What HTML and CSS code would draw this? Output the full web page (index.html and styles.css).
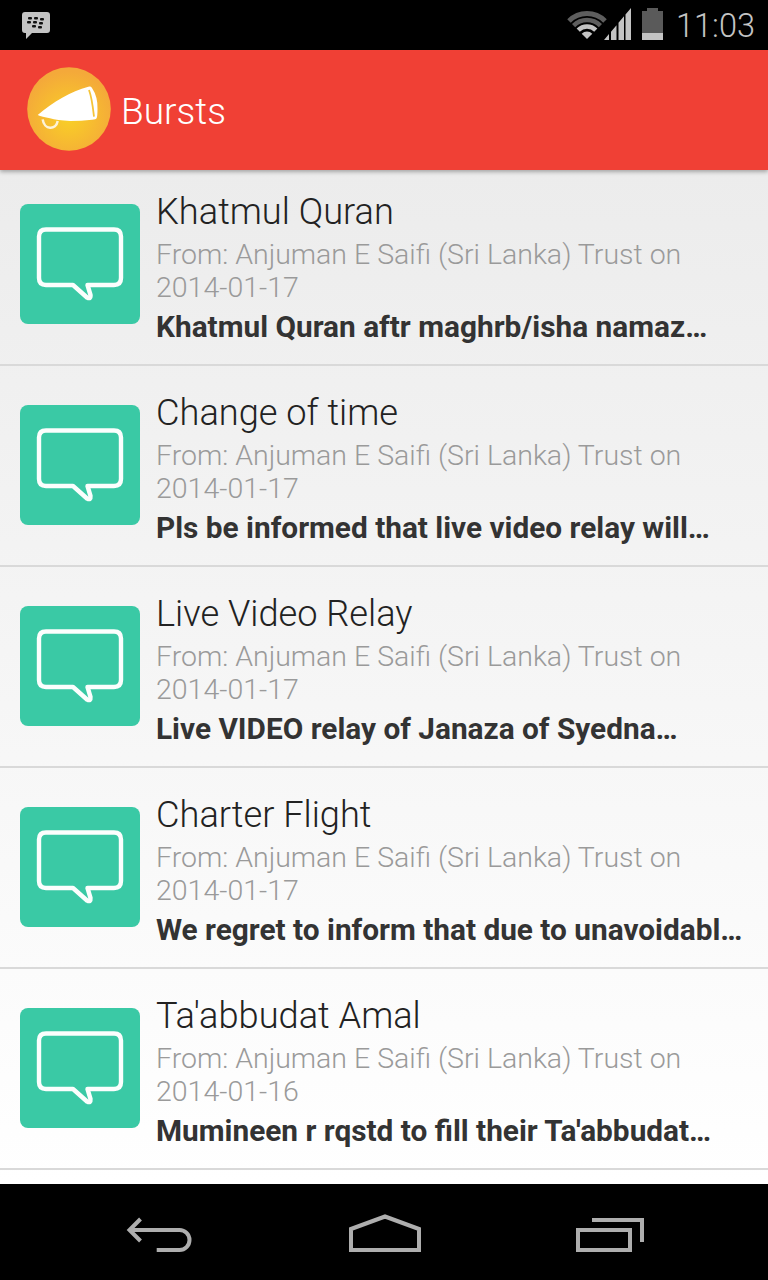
FILE: index.html
```html
<!DOCTYPE html>
<html lang="en">
<head>
    <meta charset="UTF-8">
    <meta name="viewport" content="width=device-width, initial-scale=1.0">
    <title>Bursts</title>
    <link rel="stylesheet" href="styles.css">
</head>
<body>
    <svg class="defs" width="0" height="0">
        <symbol id="bubble" viewBox="0 0 120 120">
            <path d="M26 25.500H94Q101 25.500 101 32.500V74Q101 81 94 81H67.500L70.500 91Q71 95.500 67 93.500L53 81H26Q19 81 19 74V32.500Q19 25.500 26 25.500Z" fill="none" stroke="#fbfefd" stroke-width="4.400" stroke-linejoin="round"/>
        </symbol>
    </svg>
    <div class="phone">
        <div class="status-bar">
            <svg class="bbm" width="30" height="30" viewBox="0 0 30 30">
                <path d="M4 2H26Q29 2 29 5V20Q29 23 26 23H11L5 29V23H4Q1 23 1 20V5Q1 2 4 2Z" fill="#c4c4c4"/>
                <g fill="#111" transform="translate(0 1)">
                    <rect x="7" y="6" width="4" height="2.500" rx="1"/>
                    <rect x="13" y="6" width="4" height="2.500" rx="1"/>
                    <rect x="19" y="7" width="4" height="2.500" rx="1"/>
                    <rect x="6" y="10" width="4" height="2.500" rx="1"/>
                    <rect x="12" y="10" width="4" height="2.500" rx="1"/>
                    <rect x="18" y="11" width="4" height="2.500" rx="1"/>
                    <rect x="11" y="14" width="4" height="2.500" rx="1"/>
                    <rect x="17" y="15" width="4" height="2.500" rx="1"/>
                </g>
            </svg>
            <div class="status-right">
                <svg class="wifi" width="40" height="32" viewBox="0 0 40 32">
                    <g fill="none" transform="translate(0 2)">
                        <path d="M2 11A25.500 25.500 0 0 1 38 11" stroke="#5e5e5e" stroke-width="5"/>
                        <path d="M6.600 15.600A19 19 0 0 1 33.400 15.600" stroke="#5e5e5e" stroke-width="4.500"/>
                        <path d="M11.200 20.200A12.500 12.500 0 0 1 28.800 20.200" stroke="#c4c4c4" stroke-width="4.500"/>
                        <path d="M20 29L14.700 23.700A7.500 7.500 0 0 1 25.300 23.700Z" fill="#c4c4c4"/>
                    </g>
                </svg>
                <svg class="signal" width="28" height="32" viewBox="0 0 28 32">
                    <path d="M0 32L5 26V32ZM7 23.700L12.500 17.200V32H7ZM14.500 14.800L20 8.300V32H14.500ZM21.500 6.500L27 0V32H21.500Z" fill="#c4c4c4"/>
                </svg>
                <svg class="battery" width="21" height="32" viewBox="0 0 21 32">
                    <path d="M5 0H16V3H21V25H0V3H5Z" fill="#5a5a5a"/>
                    <path d="M0 25H21V32H0Z" fill="#c4c4c4"/>
                </svg>
                <span class="clock">11:03</span>
            </div>
        </div>

        <div class="app-bar">
            <svg class="logo" width="84" height="84" viewBox="0 0 84 84">
                <defs>
                    <radialGradient id="sun" cx="50%" cy="60%" r="55%">
                        <stop offset="0" stop-color="#f9d026"/>
                        <stop offset="1" stop-color="#f4a93a"/>
                    </radialGradient>
                </defs>
                <circle cx="42" cy="42" r="41.800" fill="url(#sun)"/>
                <path d="M15.700 52.300C17 63 29 63.500 30.700 54" fill="none" stroke="#fdf3d8" stroke-width="2.500"/>
                <path d="M10.700 48C26 35 44 24 61.300 19.700Q64 19 65 21Q71 30 70.500 42Q70.500 49 69.700 51Q69 52.500 65 52.700Q54 54 43 54Q30 53.500 23 51.300Q15 50 10.700 48Z" fill="#fff"/>
                <path d="M62 23C65 31 66 41 67 49.700" fill="none" stroke="#f5c438" stroke-width="1.800"/>
            </svg>
            <span class="app-title">Bursts</span>
        </div>

        <div class="list">
            <div class="row">
                <svg class="row-icon"><use href="#bubble"/></svg>
                <div class="row-text">
                    <div class="row-title">Khatmul Quran</div>
                    <div class="row-from">From: Anjuman E Saifi (Sri Lanka) Trust on 2014-01-17</div>
                    <div class="row-msg">Khatmul Quran aftr maghrb/isha namaz…</div>
                </div>
            </div>
            <div class="row">
                <svg class="row-icon"><use href="#bubble"/></svg>
                <div class="row-text">
                    <div class="row-title">Change of time</div>
                    <div class="row-from">From: Anjuman E Saifi (Sri Lanka) Trust on 2014-01-17</div>
                    <div class="row-msg">Pls be informed that live video relay will…</div>
                </div>
            </div>
            <div class="row">
                <svg class="row-icon"><use href="#bubble"/></svg>
                <div class="row-text">
                    <div class="row-title">Live Video Relay</div>
                    <div class="row-from">From: Anjuman E Saifi (Sri Lanka) Trust on 2014-01-17</div>
                    <div class="row-msg">Live VIDEO relay of Janaza of Syedna…</div>
                </div>
            </div>
            <div class="row">
                <svg class="row-icon"><use href="#bubble"/></svg>
                <div class="row-text">
                    <div class="row-title">Charter Flight</div>
                    <div class="row-from">From: Anjuman E Saifi (Sri Lanka) Trust on 2014-01-17</div>
                    <div class="row-msg">We regret to inform that due to unavoidabl…</div>
                </div>
            </div>
            <div class="row">
                <svg class="row-icon"><use href="#bubble"/></svg>
                <div class="row-text">
                    <div class="row-title">Ta'abbudat Amal</div>
                    <div class="row-from">From: Anjuman E Saifi (Sri Lanka) Trust on 2014-01-16</div>
                    <div class="row-msg">Mumineen r rqstd to fill their Ta'abbudat…</div>
                </div>
            </div>
        </div>

        <div class="nav-bar">
            <svg width="68" height="40" viewBox="0 0 68 40">
                <path d="M14.500 6L3.500 17L14.500 28M4 17H53.500A10 10 0 0 1 53.500 37H30.700" fill="none" stroke="#aeaeae" stroke-width="4"/>
            </svg>
            <svg width="72" height="40" viewBox="0 0 72 40">
                <path d="M2 16L36 3.500L70 16V37H2Z" fill="none" stroke="#aeaeae" stroke-width="4"/>
            </svg>
            <svg width="68" height="40" viewBox="0 0 68 40">
                <path d="M2 17H54V37H2ZM16 7H66V29" fill="none" stroke="#aeaeae" stroke-width="4"/>
            </svg>
        </div>
    </div>
</body>
</html>
```

FILE: styles.css
```css
* {
    box-sizing: border-box;
}
body {
    margin: 0;
    font-family: Roboto, "Noto Sans", sans-serif;
    background-color: #fff;
}
.defs {
    display: block;
}
.phone {
    display: flex;
    flex-direction: column;
    height: 1280px;
    overflow: hidden;
}
.status-bar {
    display: flex;
    justify-content: space-between;
    align-items: center;
    flex: 0 0 50px;
    padding: 0 13px 0 21px;
    background-color: #000;
}
.status-right {
    display: flex;
    align-items: center;
    margin-bottom: 2px;
}
.signal {
    margin-left: -3px;
}
.battery {
    margin-left: 10px;
}
.clock {
    margin: 4px 0 0 13px;
    color: #c4c4c4;
    font-size: 32.500px;
    font-weight: 300;
}
.app-bar {
    position: relative;
    z-index: 1;
    display: flex;
    align-items: center;
    flex: 0 0 120px;
    padding-left: 27px;
    background-color: #f04035;
    box-shadow: 0 2px 4px rgba(0,0,0,0.3);
}
.logo {
    margin-bottom: 2px;
}
.app-title {
    margin: 3px 0 0 10px;
    color: #fff;
    font-size: 37px;
    font-weight: 300;
}
.list {
    flex: 1;
    overflow: hidden;
    background: linear-gradient(#ececec, #fff);
}
.row {
    display: flex;
    align-items: center;
    height: 201px;
    padding-left: 20px;
    border-bottom: 2px solid #d9d9d9;
}
.row:first-child {
    margin-top: -5px;
}
.row-icon {
    flex: 0 0 120px;
    width: 120px;
    height: 120px;
    margin-bottom: 2px;
    border-radius: 8px;
    background-color: #3ac9a5;
}
.row-text {
    flex: 1;
    align-self: flex-start;
    min-width: 0;
    margin-left: 16px;
    padding: 24px 20px 0 0;
}
.row-title {
    color: #222;
    font-size: 36.200px;
    font-weight: 300;
    line-height: 46px;
}
.row-from {
    margin-top: 3px;
    color: #9a9a9a;
    font-size: 28.500px;
    font-weight: 300;
    line-height: 33px;
}
.row-msg {
    margin-top: 3px;
    color: #333;
    font-size: 29.800px;
    font-weight: 700;
    line-height: 40px;
    white-space: nowrap;
}
.nav-bar {
    display: flex;
    justify-content: space-between;
    align-items: center;
    flex: 0 0 96px;
    padding: 2px 124px 0 126px;
    background-color: #000;
}
```
